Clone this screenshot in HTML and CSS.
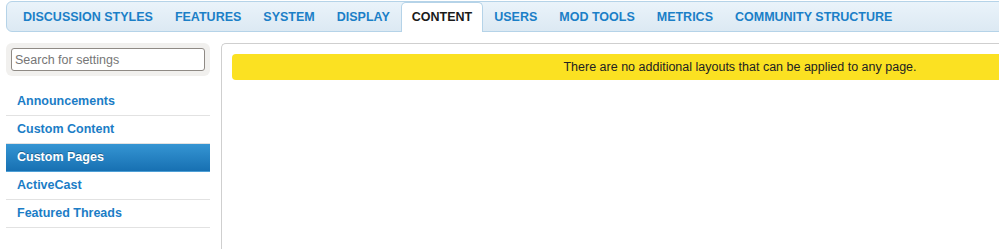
FILE: index.html
```html
<!DOCTYPE html>
<html lang="en">
<head>
    <meta charset="UTF-8" />
    <meta name="viewport" content="width=device-width, initial-scale=1" />
    <title>Settings - Content</title>
    <link rel="stylesheet" href="styles.css">
</head>
<body>
    <div class="page">
        <div class="tab-bar">
            <ul class="tabs">
                <li class="tab">DISCUSSION STYLES</li>
                <li class="tab">FEATURES</li>
                <li class="tab">SYSTEM</li>
                <li class="tab">DISPLAY</li>
                <li class="tab active">CONTENT</li>
                <li class="tab">USERS</li>
                <li class="tab">MOD TOOLS</li>
                <li class="tab">METRICS</li>
                <li class="tab">COMMUNITY STRUCTURE</li>
            </ul>
        </div>

        <div class="layout">
            <div class="sidebar">
                <div class="search-box">
                    <input type="text" placeholder="Search for settings" />
                </div>
                <ul class="side-nav">
                    <li><a href="#">Announcements</a></li>
                    <li><a href="#">Custom Content</a></li>
                    <li class="selected"><a href="#">Custom Pages</a></li>
                    <li><a href="#">ActiveCast</a></li>
                    <li><a href="#">Featured Threads</a></li>
                </ul>
            </div>

            <div class="panel">
                <div class="notice">There are no additional layouts that can be applied to any page.</div>
            </div>
        </div>
    </div>
</body>
</html>
```

FILE: styles.css
```css
body {
    font-family: "Liberation Sans", Arial, sans-serif;
    background-color: #ffffff;
    margin: 0;
    overflow: hidden;
}
.page {
    width: 1252px;
    padding: 1px 0 0 6px;
}
.tab-bar {
    background: linear-gradient(#eaf3fa, #dce9f3);
    border: 1px solid #b5d3e8;
    border-radius: 6px 0 0 6px;
    height: 29px;
}
.tabs {
    list-style: none;
    margin: 0;
    padding: 0 0 0 5px;
    display: flex;
    height: 30px;
}
.tab {
    padding: 0 10px;
    border: 1px solid transparent;
    border-bottom: none;
    line-height: 29px;
    font-size: 12.5px;
    font-weight: bold;
    color: #1b7fc7;
    white-space: nowrap;
}
.tab.active {
    background: #ffffff;
    border-color: #b5d3e8;
    border-radius: 5px 5px 0 0;
    color: #1a1a1a;
}
.layout {
    display: flex;
    gap: 11px;
    margin-top: 11px;
    height: 220px;
}
.sidebar {
    width: 204px;
    flex-shrink: 0;
}
.search-box {
    background-color: #f1f0ee;
    border-radius: 6px;
    padding: 5px;
}
.search-box input {
    box-sizing: border-box;
    width: 194px;
    height: 23px;
    margin: 0;
    border: 1px solid #8f8a85;
    border-radius: 3px;
    padding: 0 3px;
    font-family: "Liberation Sans", Arial, sans-serif;
    font-size: 12.5px;
    color: #333;
}
.search-box input::placeholder {
    color: #767676;
}
.side-nav {
    list-style: none;
    margin: 12px 0 0;
    padding: 0;
}
.side-nav li {
    border-bottom: 1px solid #e2e2e2;
}
.side-nav a {
    display: block;
    padding-left: 11px;
    line-height: 27px;
    font-size: 12.5px;
    font-weight: bold;
    color: #1b7dc6;
    text-decoration: none;
}
.side-nav li.selected {
    background: linear-gradient(#3595d3, #1770b2);
    border-bottom-color: #4d9fd6;
}
.side-nav li.selected a {
    color: #ffffff;
    text-shadow: 0 -1px 0 rgba(0,0,0,0.3);
}
.panel {
    flex: 1;
    border: 1px solid #cfcfcf;
    border-right: none;
    border-bottom: none;
    border-radius: 5px 0 0 0;
    padding: 10px;
}
.notice {
    background-color: #fbe122;
    border-radius: 4px;
    height: 26px;
    line-height: 26px;
    text-align: center;
    font-size: 12.5px;
    color: #222;
}
```
